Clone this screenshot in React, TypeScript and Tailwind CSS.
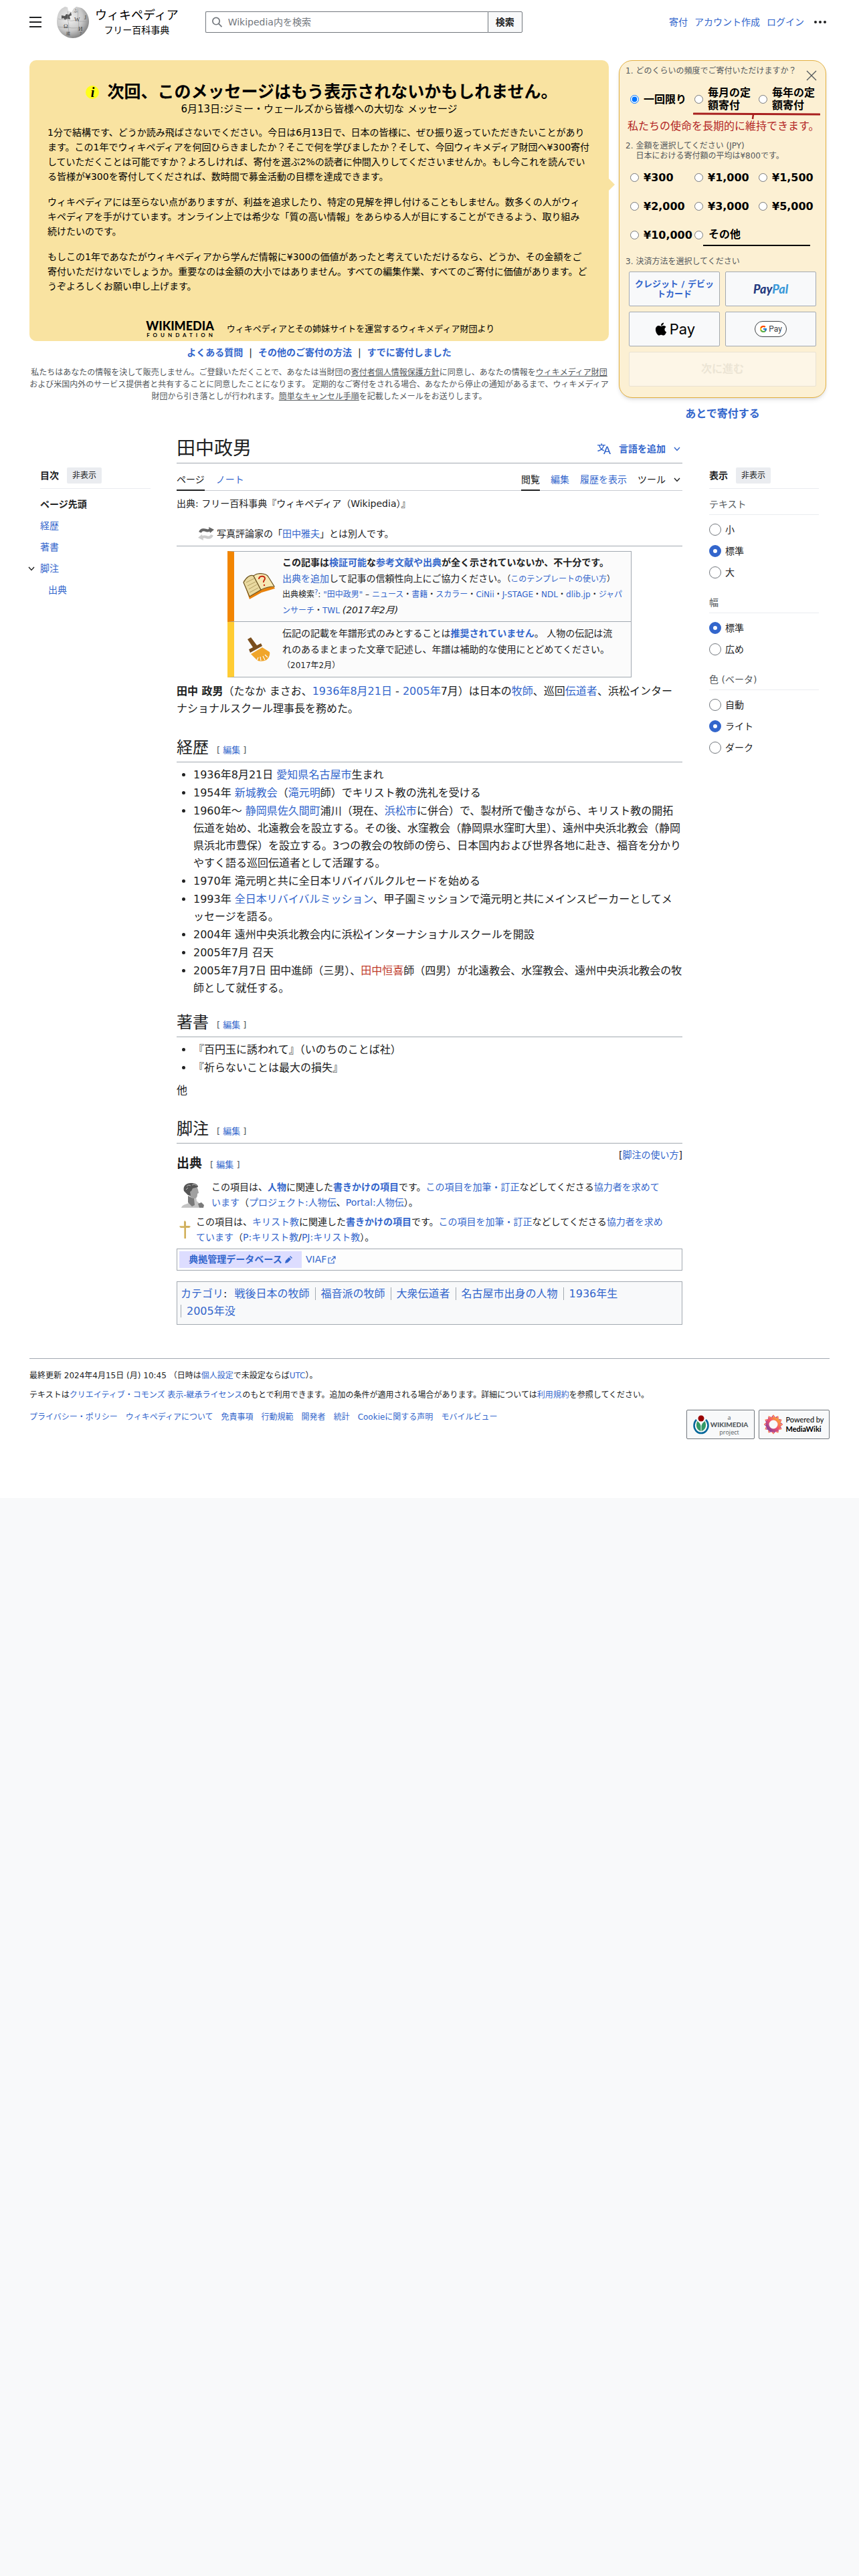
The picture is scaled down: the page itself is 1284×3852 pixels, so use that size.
import React from 'react';
import { FaApple } from 'react-icons/fa';
import { FcGoogle } from 'react-icons/fc';

interface LinkProps {
  children: React.ReactNode;
  className?: string;
}

function Link({ children, className = 'text-[#3366cc]' }: LinkProps) {
  return (
    <a href="#" className={className}>
      {children}
    </a>
  );
}

function Chevron() {
  return (
    <svg width="10" height="7" viewBox="0 0 10 7" fill="none" stroke="currentColor" strokeWidth="1.4">
      <path d="M1 1l4 4.5L9 1" />
    </svg>
  );
}

function GlobeLogo() {
  return (
    <svg width="50" height="50" viewBox="0 0 50 50" aria-hidden="true">
      <defs>
        <radialGradient id="globe" cx="38%" cy="35%" r="70%">
          <stop offset="0" stopColor="#f4f4f4" />
          <stop offset="0.6" stopColor="#c9c9c9" />
          <stop offset="1" stopColor="#7d7d7d" />
        </radialGradient>
      </defs>
      <path
        d="M8 5l5-3 4 1 1 5 5 2 3-5 4-3 8 2c7 4 11 12 11 20 0 13-11 25-24 25S1 38 1 25C1 17 3 9 8 5z"
        fill="url(#globe)"
      />
      <path d="M8 15l5 1 2-3 4 1 3-4 1 5-3 1 1 5-5-1-3 2-2-3-3 1z" fill="#555" />
      <path
        d="M3 20c6 3 10-1 15 2s9-1 14 1 10 0 15 2M3 32c6 2 11-1 16 1s10 0 15 1 8-1 12-1M17 9c2 6-1 10 1 16s-1 12 1 20M32 5c2 6-1 12 1 18s-1 12 0 22"
        fill="none"
        stroke="#999"
        strokeWidth="0.6"
      />
      <g fontFamily="Liberation Serif" fontSize="9" fill="#444">
        <text x="11" y="34">Ω</text>
        <text x="27" y="24">W</text>
        <text x="33" y="38">И</text>
        <text x="42" y="21" fontSize="8">J</text>
      </g>
      <g fontFamily="Noto Sans CJK JP" fontSize="6" fill="#555">
        <text x="15" y="44">維</text>
        <text x="35" y="45">7</text>
        <text x="26" y="10">ふ</text>
      </g>
    </svg>
  );
}

function BookIcon() {
  return (
    <svg width="50" height="40" viewBox="0 0 50 40" aria-hidden="true">
      <path d="M1 10l10 29 18-10 20-6-3-5-34 14z" fill="#e8820c" />
      <path d="M2 14C6 6 12 2 17 4l11 21-17 10z" fill="#e9d9a0" stroke="#6b5320" strokeWidth="1.2" />
      <path d="M17 4c5-4 12-4 18-2 3 1 4 3 5 5l8 13c-7 0-14 2-20 5z" fill="#f6e8b4" stroke="#6b5320" strokeWidth="1.2" />
      <path d="M6 14l12-6M8 19l12-6M10 24l12-7M11 29l13-7" stroke="#b09a5b" strokeWidth="0.9" />
      <path d="M25 9c0-5 9-6 9-1 0 3-3 3-2 6" fill="none" stroke="#c8280f" strokeWidth="2" />
      <circle cx="33" cy="18" r="1.2" fill="#c8280f" />
    </svg>
  );
}

function BroomIcon() {
  return (
    <svg width="34" height="36" viewBox="0 0 34 36" aria-hidden="true">
      <path d="M0 3l5-3 9 12 6-3 2 4L4 23l-2-5 6-3z" fill="#7a4e1d" />
      <path d="M5 25l17-10 11 7c1 4-1 9-5 12-4 2-9 2-13 1z" fill="#f0a52a" />
      <path d="M14 35l2-5M20 35l-1-6M26 34l-3-6M30 30l-4-4" stroke="#fbfbfb" strokeWidth="1.2" />
    </svg>
  );
}

function SwapIcon() {
  return (
    <svg width="24" height="20" viewBox="0 0 24 20" fill="none" aria-hidden="true">
      <path d="M3 8c2-5 6-4 9-3s5 0 6-1" stroke="#666" strokeWidth="4" />
      <path d="M16 0l8 4-6 5z" fill="#666" />
      <path d="M21 12c-2 5-6 4-9 3s-5 0-6 1" stroke="#ccc" strokeWidth="4" />
      <path d="M8 20l-8-4 6-5z" fill="#ccc" />
    </svg>
  );
}

function BustIcon() {
  return (
    <svg width="38" height="38" viewBox="0 0 38 38" aria-hidden="true">
      <path d="M1 38c1-4 6-5 11-7l1-9h10l1 6 6 5 3 5z" fill="#c4c4c4" />
      <path d="M8 11l16-5 2 5 1 5-2 1c0 5-1 7-5 7l-5-2-6-6z" fill="#a0a0a0" />
      <path d="M5 13C3 6 8 1 15 1c6 0 11 2 11 6l-4 1-4 1-2 4-2 1 1 6-4-1z" fill="#555" />
      <path d="M11 20l5 3 4 1 1 10-4 2-6-6zM26 32l5-2 4 4-1 4h-6z" fill="#7a7a7a" />
      <path d="M9 6l3-2 3 1M17 4l4-1 3 2M8 11l3-3" stroke="#bbb" fill="none" />
    </svg>
  );
}

function CrossIcon() {
  return (
    <svg width="17" height="28" viewBox="0 0 17 28" aria-hidden="true">
      <path d="M7 2l1-2 2 2v6h5l2 1-2 2h-5v16H7V11H2L0 9l2-1h5z" fill="#d0b060" />
      <path d="M7 11h1v16H7zM2 8h5v1H0z" fill="#e8cf8a" />
    </svg>
  );
}

function WikimediaMark() {
  return (
    <svg width="24" height="30" viewBox="0 0 24 30" aria-hidden="true">
      <path d="M5 8a10.5 11.5 0 1 0 14 0" fill="none" stroke="#006699" strokeWidth="2.5" />
      <path d="M6.5 10c-3 5-2 13 5 15V17c-1-4-3-5-5-7zM17.5 10c3 5 2 13-5 15V17c1-4 3-5 5-7z" fill="#339966" />
      <circle cx="12" cy="6" r="4.5" fill="#990000" />
    </svg>
  );
}

const petals = [0, 30, 60, 90, 120, 150, 180, 210, 240, 270, 300, 330];

function MediaWikiMark() {
  return (
    <svg width="28" height="34" viewBox="-14 -17 28 34" aria-hidden="true">
      <defs>
        <linearGradient id="flower" x1="1" y1="0" x2="0" y2="1">
          <stop offset="0" stopColor="#ffb02e" />
          <stop offset="0.5" stopColor="#f0506e" />
          <stop offset="1" stopColor="#7a3f9d" />
        </linearGradient>
      </defs>
      <g fill="none" stroke="url(#flower)">
        <circle r="9" strokeWidth="5" />
        {petals.map((a) => (
          <path key={a} d="M-2 -11L0 -13.5L2 -11" strokeWidth="1.5" transform={`rotate(${a})`} />
        ))}
      </g>
    </svg>
  );
}

function Header() {
  return (
    <header className="flex h-[66px] items-center justify-between">
      <div className="flex items-center">
        <button type="button" aria-label="メインメニュー" className="flex w-5 flex-col gap-[5px]">
          <span className="h-[2px] w-[18px] bg-[#202122]" />
          <span className="h-[2px] w-[18px] bg-[#202122]" />
          <span className="h-[2px] w-[18px] bg-[#202122]" />
        </button>
        <a href="#" className="ml-5 flex items-center gap-2 text-black">
          <GlobeLogo />
          <span className="flex flex-col items-center">
            <span className="text-[18px] leading-6">ウィキペディア</span>
            <span className="text-sm leading-5">フリー百科事典</span>
          </span>
        </a>
        <form className="ml-10 flex h-8 text-sm">
          <label className="flex w-[422px] items-center gap-2 rounded-l-[2px] border border-r-0 border-[#72777d] pl-2">
            <svg width="18" height="18" viewBox="0 0 18 18" fill="none" stroke="#72777d" strokeWidth="1.8">
              <circle cx="7.5" cy="7.5" r="5.5" />
              <path d="M11.5 11.5l5 5" />
            </svg>
            <input
              type="search"
              aria-label="Wikipedia内を検索"
              placeholder="Wikipedia内を検索"
              className="w-full outline-none placeholder:text-[#72777d]"
            />
          </label>
          <button type="button" className="w-[52px] rounded-r-[2px] border border-[#72777d] bg-[#f8f9fa] font-bold">
            検索
          </button>
        </form>
      </div>
      <nav className="flex items-center gap-[10px] text-sm">
        <Link>寄付</Link>
        <Link>アカウント作成</Link>
        <Link>ログイン</Link>
        <button type="button" aria-label="個人用ツール" className="flex w-7 justify-center gap-[3px]">
          <span className="size-1 rounded-full bg-[#202122]" />
          <span className="size-1 rounded-full bg-[#202122]" />
          <span className="size-1 rounded-full bg-[#202122]" />
        </button>
      </nav>
    </header>
  );
}

const amounts = ['¥300', '¥1,000', '¥1,500', '¥2,000', '¥3,000', '¥5,000', '¥10,000'];
const frequencies = ['一回限り', '毎月の定額寄付', '毎年の定額寄付'];

function DonationForm() {
  return (
    <form className="relative rounded-[20px] border border-[#e3b040] bg-[#fcf0d3] pt-2 pb-4 text-black shadow-md">
      <button type="button" aria-label="閉じる" className="absolute top-[14px] right-[13px]">
        <svg width="16" height="16" viewBox="0 0 16 16" stroke="#54595d" strokeWidth="1.4">
          <path d="M1 1l14 14M15 1L1 15" />
        </svg>
      </button>
      <div className="flex gap-1 pl-[9px] text-xs leading-[15px] text-[#54595d]">
        <span>1.</span>
        <span>どのくらいの頻度でご寄付いただけますか？</span>
      </div>
      <div className="mt-[15px] grid grid-cols-3 items-center pr-1 pl-4">
        {frequencies.map((name, i) => (
          <label key={name} className="flex items-center gap-[7px] text-base leading-[19px] font-bold">
            <input type="radio" name="frequency" defaultChecked={i === 0} className="size-[13px] shrink-0" />
            <span className="w-[64px]">{name}</span>
          </label>
        ))}
      </div>
      <svg className="mt-px ml-[110px]" width="190" height="11" viewBox="0 0 190 11" fill="none" stroke="#a8201f">
        <path d="M1 2l188 1" strokeWidth="3" strokeLinecap="round" />
        <path d="M90 3l-1 7" strokeWidth="2.5" />
      </svg>
      <p className="pl-3 text-base leading-5 text-[#b32424]">私たちの使命を長期的に維持できます。</p>
      <div className="mt-3 flex gap-1 pl-[9px] text-xs leading-[15px] text-[#54595d]">
        <span>2.</span>
        <span>
          金額を選択してください (JPY)
          <br />
          日本における寄付額の平均は¥800です。
        </span>
      </div>
      <div className="mt-[3px] grid grid-cols-3 pr-1 pl-4">
        {amounts.map((amount) => (
          <label key={amount} className="flex h-[43px] items-center gap-[7px] text-base font-bold">
            <input type="radio" name="amount" className="size-[13px] shrink-0" />
            {amount}
          </label>
        ))}
        <div className="col-span-2 flex h-[43px] items-center">
          <input type="radio" name="amount" aria-label="その他の金額" className="size-[13px] shrink-0" />
          <input
            type="text"
            aria-label="その他"
            placeholder="その他"
            className="h-8 w-[160px] border-b-2 border-black pl-2 text-base font-bold outline-none placeholder:text-black"
          />
        </div>
      </div>
      <div className="mt-[11px] flex gap-1 pl-[9px] text-xs leading-[15px] text-[#54595d]">
        <span>3.</span>
        <span>決済方法を選択してください</span>
      </div>
      <div className="mt-[7px] grid grid-cols-2 gap-2 px-[14px]">
        <button type="button" className="h-[52px] rounded-[2px] border border-[#a2a9b1] bg-[#f8f9fa] px-2 text-[13px] leading-[15px] font-bold text-[#3366cc]">
          クレジット / デビットカード
        </button>
        <button type="button" className="h-[52px] rounded-[2px] border border-[#a2a9b1] bg-[#f8f9fa] font-['Lato',sans-serif] text-[18px] font-black text-[#253b80] italic">
          Pay<span className="text-[#3b9ad9]">Pal</span>
        </button>
        <button type="button" className="flex h-[52px] items-center justify-center gap-[2px] rounded-[2px] border border-[#a2a9b1] bg-[#f8f9fa] font-['Inter',sans-serif] text-[22px]">
          <FaApple size={22} />
          Pay
        </button>
        <button type="button" className="flex h-[52px] items-center justify-center rounded-[2px] border border-[#a2a9b1] bg-[#f8f9fa]">
          <span className="flex h-6 items-center gap-[2px] rounded-full border border-[#3c4043] bg-white px-[6px] font-['Roboto',sans-serif] text-xs text-[#3c4043]">
            <FcGoogle size={12} />
            Pay
          </span>
        </button>
        <button type="button" disabled className="col-span-2 h-[52px] rounded-[2px] border border-[#e9e2d2] bg-[#fdf6e7] text-base font-bold text-[#ece5d5]">
          次に進む
        </button>
      </div>
    </form>
  );
}

function Banner() {
  return (
    <section className="mt-6 flex items-start pr-[5px]">
      <div className="min-w-0 flex-1">
        <div className="relative rounded-[10px] bg-[#f9e3a1] px-[27px] pt-[33px] pb-1 text-black">
          <h2 className="flex items-center justify-center gap-3 pl-2 text-[25px] leading-[30px] font-bold">
            <span className="flex size-5 items-center justify-center rounded-full bg-[#ffff1a] font-['Liberation_Serif',serif] text-[20px] italic">
              i
            </span>
            次回、このメッセージはもう表示されないかもしれません。
          </h2>
          <p className="text-center text-[15px] leading-5">6月13日:ジミー・ウェールズから皆様への大切な メッセージ</p>
          <div className="mt-[14px] space-y-4 text-sm leading-[22px]">
            <p>
              1分で結構です、どうか読み飛ばさないでください。今日は6月13日で、日本の皆様に、ぜひ振り返っていただきたいことがあります。この1年でウィキペディアを何回ひらきましたか？そこで何を学びましたか？そして、今回ウィキメディア財団へ¥300寄付していただくことは可能ですか？よろしければ、寄付を選ぶ2%の読者に仲間入りしてくださいませんか。もし今これを読んでいる皆様が¥300を寄付してくだされば、数時間で募金活動の目標を達成できます。
            </p>
            <p className="pr-1">
              ウィキペディアには至らない点がありますが、利益を追求したり、特定の見解を押し付けることもしません。数多くの人がウィキペディアを手がけています。オンライン上では希少な「質の高い情報」をあらゆる人が目にすることができるよう、取り組み続けたいのです。
            </p>
            <p>
              もしこの1年であなたがウィキペディアから学んだ情報に¥300の価値があったと考えていただけるなら、どうか、その金額をご寄付いただけないでしょうか。重要なのは金額の大小ではありません。すべての編集作業、すべてのご寄付に価値があります。どうぞよろしくお願い申し上げます。
            </p>
          </div>
          <div className="mt-[39px] flex items-center justify-center gap-4 text-[13px] leading-7">
            <svg width="108" height="28" viewBox="0 0 108 28" role="img" aria-label="Wikimedia Foundation">
              <text x="54" y="16" textAnchor="middle" fontFamily="Lato" fontWeight="900" fontSize="18">
                WIKIMEDIA
              </text>
              <text x="56" y="26" textAnchor="middle" fontFamily="Lato" fontWeight="700" fontSize="8" letterSpacing="5">
                FOUNDATION
              </text>
            </svg>
            <span>ウィキペディアとその姉妹サイトを運営するウィキメディア財団より</span>
          </div>
          <span className="absolute top-[177px] left-full border-y-[9px] border-l-[9px] border-y-transparent border-l-[#f9e3a1]" />
        </div>
        <div className="mt-[7px] flex justify-center gap-[9px] text-sm leading-5 font-bold">
          <Link>よくある質問</Link>
          <span className="font-normal">|</span>
          <Link>その他のご寄付の方法</Link>
          <span className="font-normal">|</span>
          <Link>すでに寄付しました</Link>
        </div>
        <p className="mt-[11px] text-center text-xs leading-[18px] text-[#54595d]">
          私たちはあなたの情報を決して販売しません。ご登録いただくことで、あなたは当財団の
          <Link className="underline">寄付者個人情報保護方針</Link>に同意し、あなたの情報を
          <Link className="underline">ウィキメディア財団</Link>
          および米国内外のサービス提供者と共有することに同意したことになります。 定期的なご寄付をされる場合、あなたから停止の通知があるまで、ウィキメディア財団から引き落としが行われます。
          <Link className="underline">簡単なキャンセル手順</Link>を記載したメールをお送りします。
        </p>
      </div>
      <div className="ml-[15px] w-[310px] shrink-0">
        <DonationForm />
        <div className="mt-3 text-center text-base leading-6 font-bold">
          <Link>あとで寄付する</Link>
        </div>
      </div>
    </section>
  );
}

function SideHeading({ title }: { title: string }) {
  return (
    <div className="flex items-center gap-3 border-b border-[#eaecf0] pb-[7px]">
      <span className="text-sm font-bold">{title}</span>
      <button type="button" className="h-6 rounded-[2px] bg-[#eaecf0] px-2 text-xs">
        非表示
      </button>
    </div>
  );
}

function Contents() {
  return (
    <aside className="mt-[46px] w-[181px] shrink-0 pl-4">
      <SideHeading title="目次" />
      <ul className="mt-[7px] text-sm leading-8">
        <li>
          <Link className="font-bold">ページ先頭</Link>
        </li>
        <li>
          <Link>経歴</Link>
        </li>
        <li>
          <Link>著書</Link>
        </li>
        <li className="-ml-[18px]">
          <div className="flex items-center gap-2">
            <button type="button" aria-label="脚注サブセクションを切り替えます">
              <Chevron />
            </button>
            <Link>脚注</Link>
          </div>
          <ul className="pl-[30px]">
            <li>
              <Link>出典</Link>
            </li>
          </ul>
        </li>
      </ul>
    </aside>
  );
}

const settings = [
  { title: 'テキスト', name: 'text', options: ['小', '標準', '大'], selected: '標準' },
  { title: '幅', name: 'width', options: ['標準', '広め'], selected: '標準' },
  { title: '色 (ベータ)', name: 'color', options: ['自動', 'ライト', 'ダーク'], selected: 'ライト' },
];

function Appearance() {
  return (
    <aside className="mt-[46px] w-[180px] shrink-0 pr-4">
      <SideHeading title="表示" />
      <div className="mt-[13px] space-y-[19px] text-sm">
        {settings.map((group) => (
          <fieldset key={group.name}>
            <legend className="w-full border-b border-[#eaecf0] pb-[5px] leading-5 text-[#54595d]">{group.title}</legend>
            <div className="pt-[6px]">
              {group.options.map((option) => (
                <label key={option} className="flex h-8 items-center gap-[6px]">
                  <input
                    type="radio"
                    name={group.name}
                    defaultChecked={option === group.selected}
                    className="size-[18px] appearance-none rounded-full border border-[#72777d] bg-white checked:border-[6px] checked:border-[#3366cc]"
                  />
                  {option}
                </label>
              ))}
            </div>
          </fieldset>
        ))}
      </div>
    </aside>
  );
}

function EditLink() {
  return (
    <span className="ml-3 text-[13px] leading-none font-normal text-[#54595d]">
      [ <Link>編集</Link> ]
    </span>
  );
}

function SectionHeading({ children }: { children: string }) {
  return (
    <h2 className="border-b border-[#a2a9b1] pb-[5px] text-[24px] leading-8">
      {children}
      <EditLink />
    </h2>
  );
}

function BulletList({ children }: { children: React.ReactNode }) {
  return <ul className="mt-[6px] list-disc space-y-px pl-[25px] leading-[26px]">{children}</ul>;
}

function Article() {
  return (
    <main className="mr-10 ml-[39px] min-w-0 flex-1">
      <div className="flex items-center justify-between border-b border-[#a2a9b1] pb-[3px]">
        <h1 className="text-[28px] leading-9">田中政男</h1>
        <button type="button" className="flex items-center gap-3 pr-[3px] text-sm font-bold text-[#3366cc]">
          <svg width="20" height="20" viewBox="0 0 20 20" fill="currentColor">
            <path d="M20 18h-1.44a.61.61 0 0 1-.4-.12.8.8 0 0 1-.23-.31L17 15h-5l-1 2.54a.8.8 0 0 1-.22.3.59.59 0 0 1-.4.14H9l4.55-11.47h1.89zm-3.53-4.31L14.89 9.5a11.6 11.6 0 0 1-.39-1.24q-.09.37-.19.69l-.19.56-1.58 4.19zm-6.3-1.58a13.4 13.4 0 0 1-2.91-1.41 11.46 11.46 0 0 0 2.81-5.37H12V4H7.31a4 4 0 0 0-.2-.56C6.87 2.79 6.6 2 6.6 2l-1.47.5s.4.89.6 1.5H0v1.33h2.15A11.23 11.23 0 0 0 5 10.7a17.2 17.2 0 0 1-5 2.1q.56.82.87 1.38a23.3 23.3 0 0 0 5.22-2.51 15.6 15.6 0 0 0 3.56 1.77zM3.63 5.33h4.91a8.1 8.1 0 0 1-2.45 4.45 9.1 9.1 0 0 1-2.46-4.45" />
          </svg>
          言語を追加
          <Chevron />
        </button>
      </div>
      <nav className="flex justify-between border-b border-[#c8ccd1] text-sm leading-5">
        <div className="flex gap-[17px]">
          <Link className="-mb-px border-b-2 border-[#202122] pt-[14px] pb-[5px]">ページ</Link>
          <Link className="pt-[14px] text-[#3366cc]">ノート</Link>
        </div>
        <div className="flex gap-4">
          <Link className="-mb-px border-b-2 border-[#202122] pt-[14px] pb-[5px]">閲覧</Link>
          <Link className="pt-[14px] text-[#3366cc]">編集</Link>
          <Link className="pt-[14px] text-[#3366cc]">履歴を表示</Link>
          <button type="button" className="flex items-center gap-3 pt-2 pr-[3px]">
            ツール
            <Chevron />
          </button>
        </div>
      </nav>
      <p className="mt-2 text-sm leading-[22px]">出典: フリー百科事典『ウィキペディア（Wikipedia）』</p>

      <div className="mt-[23px] flex items-center gap-1 border-b border-[#a2a9b1] pb-[7px] pl-8 text-sm leading-[22px]">
        <SwapIcon />
        <span>
          写真評論家の「<Link>田中雅夫</Link>」とは別人です。
        </span>
      </div>

      <div className="mx-[76px] mt-[7px] text-sm leading-6">
        <div className="flex border border-l-[10px] border-[#a2a9b1] border-l-[#f28500] bg-[#fbfbfb] py-1 pr-3">
          <div className="flex w-[72px] shrink-0 items-center pl-3">
            <BookIcon />
          </div>
          <div>
            <b>
              この記事は<Link>検証可能</Link>な<Link>参考文献や出典</Link>が全く示されていないか、不十分です。
            </b>
            <br />
            <Link>出典を追加</Link>して記事の信頼性向上にご協力ください。
            <span className="text-xs leading-none">
              （<Link>このテンプレートの使い方</Link>）
            </span>
            <p className="text-xs leading-6">
              出典検索
              <Link className="relative -top-1 text-[10px] leading-none text-[#3366cc]">?</Link>: <Link>"田中政男"</Link> –{' '}
              <Link>ニュース</Link>・<Link>書籍</Link>・<Link>スカラー</Link>・<Link>CiNii</Link>・<Link>J-STAGE</Link>・
              <Link>NDL</Link>・<Link>dlib.jp</Link>・<Link>ジャパンサーチ</Link>・<Link>TWL</Link>{' '}
              <i className="text-sm leading-none">(2017年2月)</i>
            </p>
          </div>
        </div>
        <div className="flex border border-t-0 border-l-[10px] border-[#a2a9b1] border-l-[#ffcc33] bg-[#fbfbfb] py-[5px] pr-5">
          <div className="flex w-[72px] shrink-0 items-center pl-5">
            <BroomIcon />
          </div>
          <div>
            伝記の記載を年譜形式のみとすることは
            <b>
              <Link>推奨されていません</Link>
            </b>
            。 人物の伝記は流れのあるまとまった文章で記述し、年譜は補助的な使用にとどめてください。
            <p className="text-xs leading-6">（2017年2月）</p>
          </div>
        </div>
      </div>

      <p className="mt-2 leading-[26px]">
        <b>田中 政男</b>（たなか まさお、<Link>1936年</Link>
        <Link>8月21日</Link> - <Link>2005年</Link>7月）は日本の<Link>牧師</Link>、巡回<Link>伝道者</Link>
        、浜松インターナショナルスクール理事長を務めた。
      </p>

      <div className="mt-[29px]">
        <SectionHeading>経歴</SectionHeading>
        <BulletList>
          <li>
            1936年8月21日 <Link>愛知県</Link>
            <Link>名古屋市</Link>生まれ
          </li>
          <li>
            1954年 <Link>新城教会</Link>（<Link>滝元明</Link>師）でキリスト教の洗礼を受ける
          </li>
          <li>
            1960年〜 <Link>静岡県</Link>
            <Link>佐久間町</Link>浦川（現在、<Link>浜松市</Link>
            に併合）で、製材所で働きながら、キリスト教の開拓伝道を始め、北遠教会を設立する。その後、水窪教会（静岡県水窪町大里）、遠州中央浜北教会（静岡県浜北市豊保）を設立する。3つの教会の牧師の傍ら、日本国内および世界各地に赴き、福音を分かりやすく語る巡回伝道者として活躍する。
          </li>
          <li>1970年 滝元明と共に全日本リバイバルクルセードを始める</li>
          <li>
            1993年 <Link>全日本リバイバルミッション</Link>、甲子園ミッションで滝元明と共にメインスピーカーとしてメッセージを語る。
          </li>
          <li>2004年 遠州中央浜北教会内に浜松インターナショナルスクールを開設</li>
          <li>2005年7月 召天</li>
          <li>
            2005年7月7日 田中進師（三男）、<Link className="text-[#bf3c2c]">田中恒喜</Link>
            師（四男）が北遠教会、水窪教会、遠州中央浜北教会の牧師として就任する。
          </li>
        </BulletList>
      </div>

      <div className="mt-[22px]">
        <SectionHeading>著書</SectionHeading>
        <BulletList>
          <li>『百円玉に誘われて』（いのちのことば社）</li>
          <li>『祈らないことは最大の損失』</li>
        </BulletList>
        <p className="mt-2 leading-[26px]">他</p>
      </div>

      <div className="mt-7">
        <SectionHeading>脚注</SectionHeading>
        <div className="flex items-start justify-between">
          <h3 className="pt-[15px] text-[19px] leading-7 font-bold">
            出典
            <EditLink />
          </h3>
          <span className="mt-[6px] text-sm leading-[22px]">
            [<Link>脚注の使い方</Link>]
          </span>
        </div>
      </div>

      <div className="mt-[11px] flex items-center gap-2 pr-6 pl-[6px] text-sm leading-[23px]">
        <span className="shrink-0">
          <BustIcon />
        </span>
        <p>
          この項目は、
          <b>
            <Link>人物</Link>
          </b>
          に関連した
          <b>
            <Link>書きかけの項目</Link>
          </b>
          です。<Link>この項目を加筆・訂正</Link>などしてくださる<Link>協力者を求めています</Link>（<Link>プロジェクト:人物伝</Link>、
          <Link>Portal:人物伝</Link>）。
        </p>
      </div>
      <div className="mt-[6px] flex items-center gap-2 pr-4 pl-1 text-sm leading-[23px]">
        <span className="shrink-0">
          <CrossIcon />
        </span>
        <p>
          この項目は、<Link>キリスト教</Link>に関連した
          <b>
            <Link>書きかけの項目</Link>
          </b>
          です。<Link>この項目を加筆・訂正</Link>などしてくださる<Link>協力者を求めています</Link>（<Link>P:キリスト教</Link>/
          <Link>PJ:キリスト教</Link>）。
        </p>
      </div>

      <div className="mt-[5px] flex border border-[#a2a9b1] bg-[#fdfdfd] p-[3px] text-sm leading-[25px]">
        <div className="flex w-[183px] items-center justify-center gap-1 bg-[#ddddff] font-bold">
          <Link>典拠管理データベース</Link>
          <svg width="11" height="11" viewBox="0 0 11 11" fill="#3366cc">
            <path d="M0 11l1-4 5-5 3 3-5 5zM7 1l1-1 3 3-1 1z" />
          </svg>
        </div>
        <a href="#" className="ml-[6px] flex items-center gap-[2px] text-[#3366cc]">
          VIAF
          <svg width="12" height="12" viewBox="0 0 12 12" fill="none" stroke="#3366cc" strokeWidth="1.2">
            <path d="M5 3H1v8h8V7M7 1h4v4M11 1L5 7" />
          </svg>
        </a>
      </div>

      <div className="mt-4 border border-[#a2a9b1] bg-[#f8f9fa] px-[5px] pt-[5px] pb-[6px] leading-[26px]">
        <Link>カテゴリ</Link>:{' '}
        <span className="mr-2 ml-[6px]">
          <Link>戦後日本の牧師</Link>
        </span>
        {['福音派の牧師', '大衆伝道者', '名古屋市出身の人物', '1936年生', '2005年没'].map((category) => (
          <span key={category} className="inline-block">
            <span className="mr-2 border-l border-[#a2a9b1] pl-2">
              <Link>{category}</Link>
            </span>
          </span>
        ))}
      </div>
    </main>
  );
}

const footerLinks = [
  'プライバシー・ポリシー',
  'ウィキペディアについて',
  '免責事項',
  '行動規範',
  '開発者',
  '統計',
  'Cookieに関する声明',
  'モバイルビュー',
];

function Footer() {
  return (
    <footer className="mt-[50px] border-t border-[#a2a9b1] pt-4 pb-[88px] text-xs leading-[18px]">
      <p>
        最終更新 2024年4月15日 (月) 10:45 （日時は<Link>個人設定</Link>で未設定ならば<Link>UTC</Link>）。
      </p>
      <p className="mt-[11px]">
        テキストは<Link>クリエイティブ・コモンズ 表示-継承ライセンス</Link>
        のもとで利用できます。追加の条件が適用される場合があります。詳細については<Link>利用規約</Link>を参照してください。
      </p>
      <div className="mt-[13px] flex items-start justify-between">
        <ul className="flex gap-3 pt-[2px]">
          {footerLinks.map((item) => (
            <li key={item}>
              <Link>{item}</Link>
            </li>
          ))}
        </ul>
        <div className="flex gap-[6px]">
          <a href="#" className="flex h-11 w-[102px] items-center justify-center gap-[2px] rounded-[2px] border border-[#72777d] bg-[#f8f9fa]">
            <WikimediaMark />
            <span className="flex flex-col text-center font-['Open_Sans',sans-serif] text-[9px] leading-[11px] text-[#54595d]">
              <span>a</span>
              <b className="font-['Lato',sans-serif] text-[10px] font-black">WIKIMEDIA</b>
              <span>project</span>
            </span>
          </a>
          <a href="#" className="flex h-11 w-[106px] items-center justify-center gap-1 rounded-[2px] border border-[#72777d] bg-[#f8f9fa] font-['Lato',sans-serif] text-[11px] leading-[14px] text-black">
            <MediaWikiMark />
            <span>
              Powered by
              <br />
              <b>MediaWiki</b>
            </span>
          </a>
        </div>
      </div>
    </footer>
  );
}

export default function App() {
  return (
    <div className="min-h-screen bg-[#f8f9fa] font-['DejaVu_Sans','Noto_Sans_CJK_JP',sans-serif] text-base text-[#202122]" lang="ja">
      <div className="bg-white px-11">
        <Header />
        <Banner />
        <div className="mt-[22px] flex items-start">
          <Contents />
          <Article />
          <Appearance />
        </div>
        <Footer />
      </div>
    </div>
  );
}
